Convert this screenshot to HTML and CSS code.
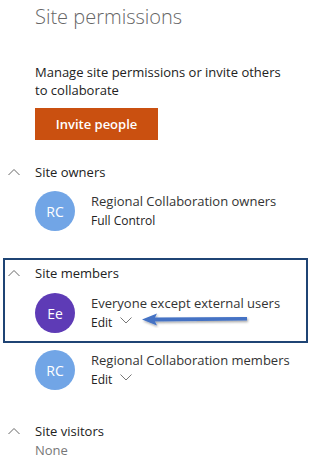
FILE: index.html
```html
<!DOCTYPE html>
<html>
<head>
<meta charset="utf-8">
<link rel="stylesheet" href="styles.css">
</head>
<body>
<div class="page">
  <h1 class="title">Site permissions</h1>
  <p class="desc">Manage site permissions or invite others to collaborate</p>
  <button class="invite">Invite people</button>

  <section class="group owners">
    <div class="group-head">
      <svg class="chev" width="12" height="8" viewBox="0 0 12 8"><path d="M0.5 7 L6 1.5 L11.5 7" fill="none" stroke="#666" stroke-width="1"/></svg>
      <span>Site owners</span>
    </div>
    <div class="member">
      <div class="avatar blue">RC</div>
      <div class="info">
        <div class="name">Regional Collaboration owners</div>
        <div class="perm">Full Control</div>
      </div>
    </div>
  </section>

  <section class="group members highlight">
    <div class="group-head">
      <svg class="chev" width="12" height="8" viewBox="0 0 12 8"><path d="M0.5 7 L6 1.5 L11.5 7" fill="none" stroke="#666" stroke-width="1"/></svg>
      <span>Site members</span>
    </div>
    <div class="member">
      <div class="avatar purple">Ee</div>
      <div class="info">
        <div class="name">Everyone except external users</div>
        <div class="perm">Edit <svg class="down" width="12" height="7" viewBox="0 0 12 7"><path d="M0.5 0.5 L6 6 L11.5 0.5" fill="none" stroke="#777" stroke-width="1"/></svg></div>
      </div>
    </div>
    <svg class="arrow" width="112" height="16" viewBox="0 0 112 16">
      <defs><filter id="sh" x="-10%" y="-50%" width="120%" height="200%"><feDropShadow dx="1" dy="1.5" stdDeviation="1" flood-color="#000" flood-opacity="0.35"/></filter></defs>
      <g filter="url(#sh)">
        <path d="M12 5.5 L106 5 L106 8.5 L12 9.5 Z" fill="#4472c4"/>
        <path d="M1 7.5 L16 1.5 L13 7.5 L16 13.5 Z" fill="#4472c4"/>
      </g>
    </svg>
  </section>

  <div class="member standalone">
    <div class="avatar blue">RC</div>
    <div class="info">
      <div class="name">Regional Collaboration members</div>
      <div class="perm">Edit <svg class="down" width="12" height="7" viewBox="0 0 12 7"><path d="M0.5 0.5 L6 6 L11.5 0.5" fill="none" stroke="#777" stroke-width="1"/></svg></div>
    </div>
  </div>

  <section class="group visitors">
    <div class="group-head">
      <svg class="chev" width="12" height="8" viewBox="0 0 12 8"><path d="M0.5 7 L6 1.5 L11.5 7" fill="none" stroke="#666" stroke-width="1"/></svg>
      <span>Site visitors</span>
    </div>
    <div class="none">None</div>
  </section>
</div>
</body>
</html>
```

FILE: styles.css
```css
html, body {
  margin: 0;
  padding: 0;
  background: #fff;
}
body {
  font-family: "Open Sans", "Liberation Sans", sans-serif;
  color: #333;
  width: 320px;
  height: 475px;
  overflow: hidden;
}
.page {
  padding: 0 0 0 8px;
}
.title {
  margin: 0 0 0 27px;
  padding-top: 3px;
  font-size: 20px;
  font-weight: 300;
  line-height: 28px;
  color: #666;
}
.desc {
  margin: 32px 0 0 27px;
  width: 260px;
  font-size: 13px;
  line-height: 18px;
  color: #222;
}
.invite {
  display: block;
  margin: 9px 0 0 27px;
  width: 123px;
  height: 32px;
  border: 0;
  background: #ca5010;
  color: #fff;
  font-family: inherit;
  font-size: 13px;
  font-weight: 600;
  padding: 0;
}
.group {
  display: flex;
  flex-direction: column;
}
.owners {
  margin-top: 22px;
}
.group-head {
  display: flex;
  align-items: center;
  height: 20px;
  font-size: 13px;
  color: #222;
}
.chev {
  width: 12px;
  margin-right: 15px;
}
.member {
  display: flex;
  align-items: center;
  margin-left: 27px;
  margin-top: 9px;
  gap: 16px;
}
.avatar {
  width: 40px;
  height: 40px;
  border-radius: 50%;
  color: #fff;
  display: flex;
  align-items: center;
  justify-content: center;
  font-size: 14px;
  flex: none;
}
.blue { background: #71a5e6; }
.purple { background: #5e3bb6; }
.info {
  display: flex;
  flex-direction: column;
}
.name {
  font-size: 13px;
  line-height: 19px;
  color: #333;
}
.perm {
  font-size: 12px;
  line-height: 19px;
  color: #222;
  display: flex;
  align-items: center;
  gap: 8px;
}
.down {
  margin-top: -4px;
}
.highlight {
  position: relative;
  margin: 27px 0 0 -5px;
  width: 298px;
  border: 2px solid #1f4474;
  padding: 3px 0 8px 3px;
}
.highlight .member {
  margin-top: 10px;
}
.arrow {
  position: absolute;
  left: 136px;
  top: 52px;
}
.standalone {
  margin-top: 7px;
}
.visitors {
  margin-top: 31px;
}
.none {
  margin-left: 27px;
  font-size: 13px;
  line-height: 19px;
  color: #777;
}
```
